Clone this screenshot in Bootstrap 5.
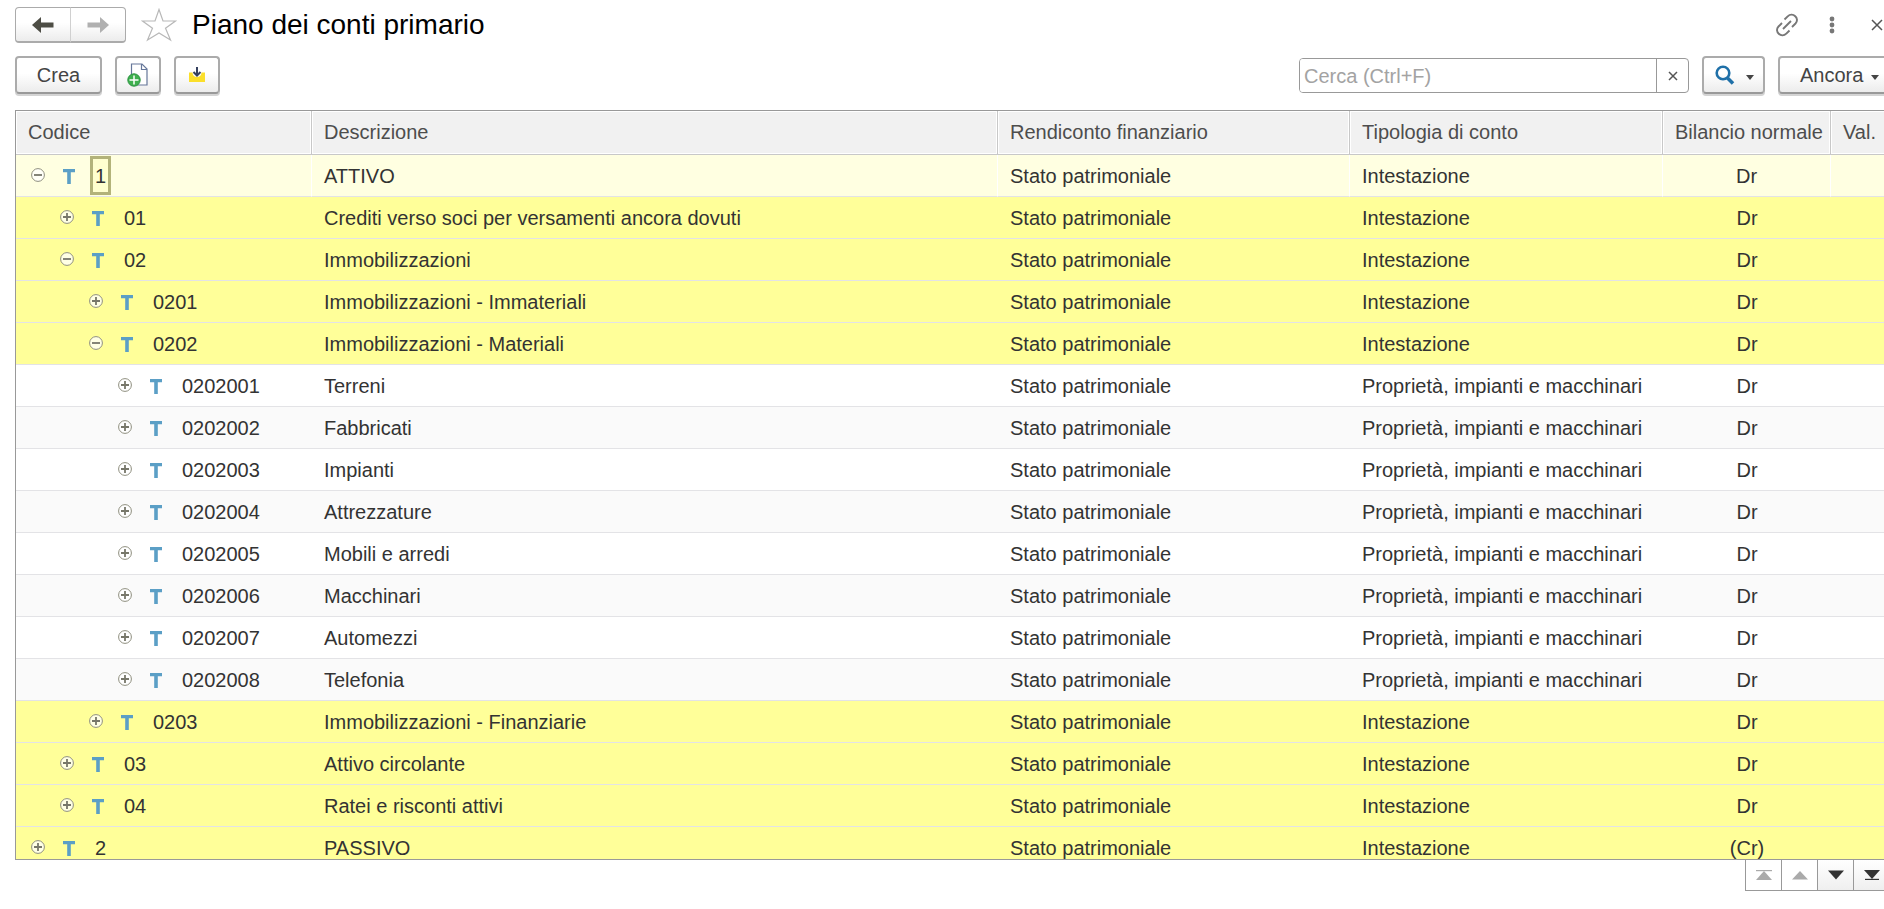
<!DOCTYPE html>
<html lang="it">
<head>
<meta charset="utf-8">
<meta name="viewport" content="width=device-width, initial-scale=1">
<title>Piano dei conti primario</title>
<link href="https://cdn.jsdelivr.net/npm/bootstrap@5.3.0/dist/css/bootstrap.min.css" rel="stylesheet">
<style>
body { font-family: "Liberation Sans", Arial, sans-serif; font-size: 20px; line-height: 24px; color: #333; background: #fff; }
.workspace { padding: 7px 0 18px 15px; margin-right: -4px; }
.title-row { height: 36px; }
.tool-row { height: 40px; margin-top: 13px; }
.page-title { font-size: 28px; line-height: 32px; color: #000; margin: 0 0 0 15px; }
.nav-pair { margin-right: 15px; }
.nav-pair .btn { width: 56px; height: 36px; padding: 0; border: 1px solid #ababab; border-bottom-width: 2px; border-radius: 4px; background: linear-gradient(#fff 45%, #ececec); }
.nav-pair .btn + .btn { border-left-color: #d0d0d0; }
.plain-btn { border: 0; background: none; padding: 0; line-height: 0; }
.tool-btn { height: 38px; padding: 0; border: 2px solid #ababab; border-bottom-color: #999; border-radius: 4px; background: linear-gradient(#fff 45%, #ececec); box-shadow: 0 2px 0 #d4d4d4; color: #444; font-size: 20px; line-height: 24px; }
.tool-gap { gap: 13px; }
.w-text { width: 87px; }
.w-icon { width: 46px; }
.w-find { width: 63px; gap: 11px; padding-left: 2px; }
.w-more { width: 110px; gap: 8px; padding-left: 20px; }
.find-box { width: 390px; height: 35px; margin-top: 2px; border: 1px solid #999; border-radius: 4px; overflow: hidden; }
.find-box input { border: 0; padding: 0 4px; font-size: 20px; color: #333; background: #fff; border-radius: 0; }
.find-box input::placeholder { color: #a3a3a3; opacity: 1; }
.find-box .btn { width: 32px; border: 0; border-left: 1px solid #999; border-radius: 0; padding: 0; line-height: 0; }
.grid-wrap { margin-top: 14px; border: 1px solid #999; min-height: 0; }
.accounts { table-layout: fixed; width: 100%; margin: 0; border-collapse: separate; border-spacing: 0; }
.accounts th { height: 44px; padding: 0 12px; font-weight: 400; color: #4d4d4d; background: #f1f1f1; border-right: 1px solid #c8c8c8; border-bottom: 1px solid #c8c8c8; box-shadow: inset 0 0 0 1px #fff; white-space: nowrap; }
.accounts td { height: 42px; padding: 2px 12px 0; border-bottom: 1px solid #e3e3e6; white-space: nowrap; overflow: hidden; }
.accounts td:first-child { padding-top: 0; }
.leaf-row:nth-child(odd) { background: #fafafa; }
.group-row { background: #ffff99; }
.group-row.current-row { background: #ffffe1; }
.current-row td { border-right: 1px solid #fff; }
.c-code { width: 296px; } .c-rend { width: 352px; } .c-tipo { width: 313px; } .c-bil { width: 168px; } .c-val { width: 56px; }
.node { padding-left: 3px; height: 41px; }
.node-1 { padding-left: 32px; } .node-2 { padding-left: 61px; } .node-3 { padding-left: 90px; }
.node svg { flex: none; }
.toggle-btn { width: 14px; height: 14px; }
.acc-icon { margin-left: 18px; margin-top: 2px; }
.code-text { margin-left: 20px; padding-top: 2px; }
.code-sel { margin-left: 15px; padding: 0 2px; border: 3px solid #b3b37a; height: 39px; line-height: 34px; background: #ffffcf; }
.pager { margin-right: -1px; }
.pager .btn { width: 36px; height: 31px; padding: 0; border: 1px solid #999; border-width: 0 0 1px 1px; border-radius: 0; background: linear-gradient(#fff, #efefef); line-height: 0; }
.pager .btn:disabled { opacity: 1; background: #fff; }
</style>
</head>
<body class="overflow-hidden">
<svg class="d-none" aria-hidden="true">
  <symbol id="minus" viewBox="0 0 14 14"><circle cx="7" cy="7" r="6.4" fill="#fff" fill-opacity=".75" stroke="#8f8f7f" stroke-width="1"/><path d="M3 7h8" stroke="#77776a" stroke-width="1.8"/></symbol>
  <symbol id="plus" viewBox="0 0 14 14"><circle cx="7" cy="7" r="6.4" fill="#fff" fill-opacity=".75" stroke="#8f8f7f" stroke-width="1"/><path d="M3 7h8M7 3v8" stroke="#77776a" stroke-width="1.8"/></symbol>
  <symbol id="acc" viewBox="0 0 12 15"><path d="M0 0h12v3.200H7.800V15H4.200V3.200H0z" fill="#5b9fc6"/></symbol>
</svg>
<div class="workspace vh-100 d-flex flex-column">
  <header class="title-row d-flex align-items-center">
    <div class="btn-group nav-pair">
      <button class="btn" type="button" aria-label="Indietro"><svg class="d-block mx-auto" width="22" height="16" viewBox="0 0 22 16"><path d="M0 8 9 0v5.500h12.500v5H9V16z" fill="#4d4d45"/></svg></button>
      <button class="btn" type="button" aria-label="Avanti"><svg class="d-block mx-auto" width="22" height="16" viewBox="0 0 22 16"><path d="M22 8 13 0v5.500H.5v5H13V16z" fill="#b0b0b0"/></svg></button>
    </div>
    <button class="plain-btn" type="button" aria-label="Preferiti"><svg width="36" height="34" viewBox="0 0 36 34"><path d="M18 1.500 22 13h12.500L24.500 20.300 29.500 32 18 25 6.500 32l5-11.700L1.500 13H14z" fill="#fff" stroke="#b8b8b8" stroke-width="1.200"/></svg></button>
    <h1 class="page-title">Piano dei conti primario</h1>
    <div class="ms-auto d-flex align-items-center">
      <button class="plain-btn" type="button" aria-label="Collegamento"><svg width="24" height="24" viewBox="0 0 24 24" fill="none" stroke="#777" stroke-width="1.900"><path d="M9.500 6.500l3.200-3.200c5-4.800 12.500 2.200 7.800 7.200L17 14M14.500 17.500l-3.200 3.200c-5 4.800-12.500-2.200-7.800-7.200L7 10M8 16l8-8"/></svg></button>
      <button class="plain-btn" type="button" aria-label="Altro"><svg width="66" height="20" viewBox="0 0 66 20" fill="#777"><circle cx="33" cy="4" r="2.400"/><circle cx="33" cy="10" r="2.400"/><circle cx="33" cy="16" r="2.400"/></svg></button>
      <button class="plain-btn" type="button" aria-label="Chiudi"><svg width="23" height="12" viewBox="0 0 23 12"><path d="M7 1l10 10M17 1L7 11" stroke="#555" stroke-width="1.500"/></svg></button>
    </div>
  </header>

  <div class="tool-row tool-gap d-flex align-items-start">
    <button class="tool-btn w-text" type="button">Crea</button>
    <button class="tool-btn w-icon" type="button" aria-label="Crea nuovo gruppo"><svg class="d-block mx-auto" width="22" height="24" viewBox="0 0 22 24"><path d="M4.500 1H15l5 5v16H4.500z" fill="#fff" stroke="#66779a" stroke-width="1.200"/><path d="M14.500 1v5.500H20" fill="none" stroke="#66779a" stroke-width="1.200"/><circle cx="7" cy="17" r="6.200" fill="#3fb04f" stroke="#2b9340"/><path d="M2.500 17h9M7 12.500v9" stroke="#fff" stroke-width="1.500"/></svg></button>
    <button class="tool-btn w-icon" type="button" aria-label="Carica"><svg class="d-block mx-auto" width="18" height="16" viewBox="0 0 18 16"><path d="M1 5.500h3.500c0 6 9 6 9 0H17V15H1z" fill="#fbdf2b"/><path d="M9 0v7M5.500 5L9 8.500 12.500 5" fill="none" stroke="#34405e" stroke-width="2"/></svg></button>
    <div class="find-box input-group flex-nowrap ms-auto">
      <input class="form-control shadow-none" type="text" placeholder="Cerca (Ctrl+F)" aria-label="Cerca">
      <button class="btn" type="button" aria-label="Cancella"><svg width="10" height="10" viewBox="0 0 10 10"><path d="M1 1l8 8M9 1L1 9" stroke="#555" stroke-width="1.500"/></svg></button>
    </div>
    <button class="tool-btn w-find d-flex align-items-center justify-content-center" type="button" aria-label="Trova"><svg width="20" height="21" viewBox="0 0 20 21"><circle cx="8" cy="8" r="6.300" fill="none" stroke="#1f70a8" stroke-width="2.600"/><path d="M12.500 13l5.500 5.500" stroke="#1f70a8" stroke-width="3.600"/></svg><svg class="mt-1" width="8" height="5" viewBox="0 0 8 5"><path d="M0 0h8L4 5z" fill="#444"/></svg></button>
    <button class="tool-btn w-more d-flex align-items-center" type="button">Ancora<svg class="mt-1" width="8" height="5" viewBox="0 0 8 5"><path d="M0 0h8L4 5z" fill="#444"/></svg></button>
  </div>

  <div class="grid-wrap flex-fill overflow-hidden">
    <table class="accounts">
      <colgroup><col class="c-code"><col><col class="c-rend"><col class="c-tipo"><col class="c-bil"><col class="c-val"></colgroup>
      <thead><tr><th>Codice</th><th>Descrizione</th><th>Rendiconto finanziario</th><th>Tipologia di conto</th><th>Bilancio normale</th><th>Val.</th></tr></thead>
      <tbody id="rows"></tbody>
    </table>
  </div>
  <div class="pager d-flex justify-content-end">
    <button class="btn" type="button" disabled aria-label="Inizio"><svg width="16" height="10" viewBox="0 0 16 10"><path d="M0 .6h16" stroke="#aaa" stroke-width="1.200"/><path d="M0 10h16L8 1z" fill="#aaa"/></svg></button>
    <button class="btn" type="button" disabled aria-label="Su"><svg width="16" height="10" viewBox="0 0 16 10"><path d="M0 9.500h16L8 1z" fill="#aaa"/></svg></button>
    <button class="btn" type="button" aria-label="Giù"><svg width="16" height="10" viewBox="0 0 16 10"><path d="M0 .5h16L8 9.500z" fill="#333"/></svg></button>
    <button class="btn" type="button" aria-label="Fine"><svg width="16" height="10" viewBox="0 0 16 10"><path d="M0 0h16L8 9z" fill="#333"/><path d="M1 9.400h14" stroke="#333" stroke-width="1.200"/></svg></button>
  </div>
</div>
<script src="https://cdn.jsdelivr.net/npm/bootstrap@5.3.0/dist/js/bootstrap.bundle.min.js"></script>
<script>
// level, open, code, description, normal balance
const accounts = [
  [0, 1, "1", "ATTIVO", "Dr"],
  [1, 0, "01", "Crediti verso soci per versamenti ancora dovuti", "Dr"],
  [1, 1, "02", "Immobilizzazioni", "Dr"],
  [2, 0, "0201", "Immobilizzazioni - Immateriali", "Dr"],
  [2, 1, "0202", "Immobilizzazioni - Materiali", "Dr"],
  [3, 0, "0202001", "Terreni", "Dr"],
  [3, 0, "0202002", "Fabbricati", "Dr"],
  [3, 0, "0202003", "Impianti", "Dr"],
  [3, 0, "0202004", "Attrezzature", "Dr"],
  [3, 0, "0202005", "Mobili e arredi", "Dr"],
  [3, 0, "0202006", "Macchinari", "Dr"],
  [3, 0, "0202007", "Automezzi", "Dr"],
  [3, 0, "0202008", "Telefonia", "Dr"],
  [2, 0, "0203", "Immobilizzazioni - Finanziarie", "Dr"],
  [1, 0, "03", "Attivo circolante", "Dr"],
  [1, 0, "04", "Ratei e risconti attivi", "Dr"],
  [0, 0, "2", "PASSIVO", "(Cr)"]
];
document.getElementById("rows").innerHTML = accounts.map(([level, open, code, name, side], i) => `
  <tr class="${level < 3 ? "group-row" : "leaf-row"} ${i === 0 ? "current-row" : ""}">
    <td><div class="node node-${level} d-flex align-items-center">
      <button class="plain-btn" type="button" aria-label="${open ? "Comprimi" : "Espandi"} ${code}"><svg class="toggle-btn"><use href="#${open ? "minus" : "plus"}"/></svg></button>
      <svg class="acc-icon" width="12" height="15"><use href="#acc"/></svg>
      <span class="${i === 0 ? "code-sel" : "code-text"}">${code}</span></div></td>
    <td>${name}</td><td>Stato patrimoniale</td>
    <td>${level < 3 ? "Intestazione" : "Proprietà, impianti e macchinari"}</td>
    <td class="text-center">${side}</td><td></td>
  </tr>`).join("");
</script>
</body>
</html>
